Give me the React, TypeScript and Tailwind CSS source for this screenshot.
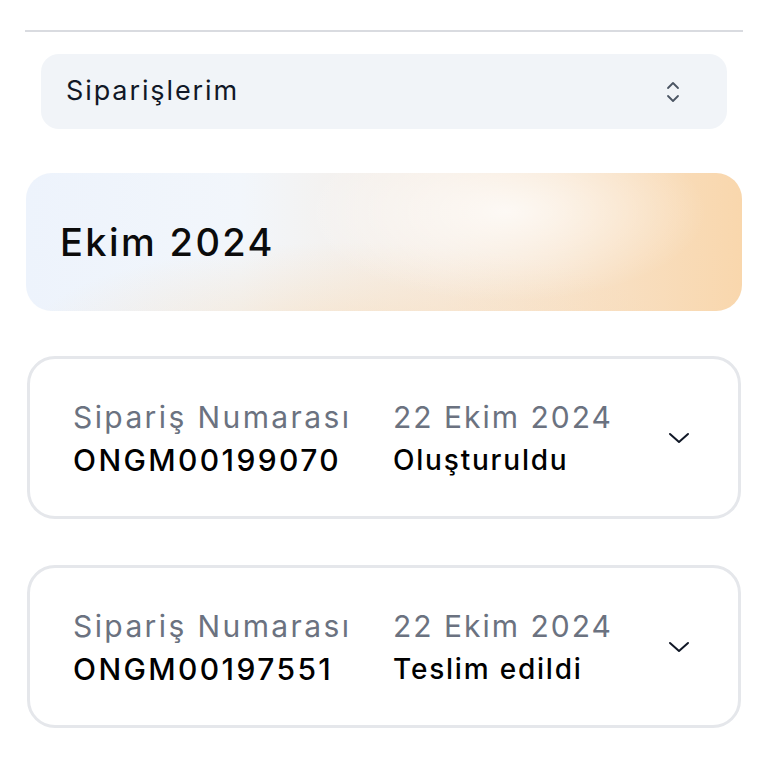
import React from "react";

function UpDown() {
  return (
    <svg width="16" height="26" viewBox="0 0 16 26" fill="none" stroke="#4b5563" strokeWidth="1.8" strokeLinecap="round" strokeLinejoin="round">
      <path d="M3 9 L8 4 L13 9" />
      <path d="M3 17 L8 22 L13 17" />
    </svg>
  );
}

function Chevron() {
  return (
    <svg width="22" height="14" viewBox="0 0 22 14" fill="none" stroke="#111827" strokeWidth="2" strokeLinecap="round" strokeLinejoin="round">
      <path d="M2 3 L11 11 L20 3" />
    </svg>
  );
}

function OrderCard({ no, status }: { no: string; status: string }) {
  return (
    <div className="mx-[27px] h-[163px] rounded-[28px] border-[3px] border-[#e5e7eb] bg-white flex items-center pl-[43px] pr-[48px]">
      <div className="flex flex-col w-[320px]">
        <span className="text-[30px] leading-[44px] tracking-[2.4px] text-[#6b7280]">Sipariş Numarası</span>
        <span className="text-[30px] leading-[42px] tracking-[2.4px] font-medium text-black">{no}</span>
      </div>
      <div className="flex flex-col flex-1">
        <span className="text-[30px] leading-[44px] tracking-[2px] text-[#6b7280]">22 Ekim 2024</span>
        <span className="text-[28px] leading-[42px] tracking-[1.8px] font-medium text-black">{status}</span>
      </div>
      <Chevron />
    </div>
  );
}

export default function App() {
  return (
    <div className="w-[768px] h-[768px] bg-white overflow-hidden" style={{ fontFamily: "Inter, 'Noto Sans', sans-serif" }}>
      <div className="pt-[30px] px-[25px]">
        <div className="h-[2px] bg-[#d9dbe0]" />
      </div>
      <div className="mt-[22px] mx-[41px] h-[75px] rounded-[18px] bg-[#f1f4f8] flex items-center justify-between pl-[25px] pr-[46px]">
        <span className="text-[27px] tracking-[1.9px] text-[#111827]">Siparişlerim</span>
        <UpDown />
      </div>
      <div className="mt-[44px] mx-[26px] h-[138px] rounded-[26px] flex items-center pl-[34px] bg-[radial-gradient(ellipse_28%_65%_at_67%_28%,rgba(255,255,255,0.75),rgba(255,255,255,0)_100%),radial-gradient(ellipse_45%_70%_at_45%_120%,rgba(249,214,170,0.5),rgba(249,214,170,0)_100%),linear-gradient(90deg,#edf3fc_0%,#f2f6fb_30%,#f6ece2_58%,#f8e0c4_80%,#f9d7ad_100%)]">
        <span className="text-[38px] tracking-[2.4px] font-medium text-[#0b0b0b]">Ekim 2024</span>
      </div>
      <div className="mt-[45px] flex flex-col gap-[46px]">
        <OrderCard no="ONGM00199070" status="Oluşturuldu" />
        <OrderCard no="ONGM00197551" status="Teslim edildi" />
      </div>
    </div>
  );
}
